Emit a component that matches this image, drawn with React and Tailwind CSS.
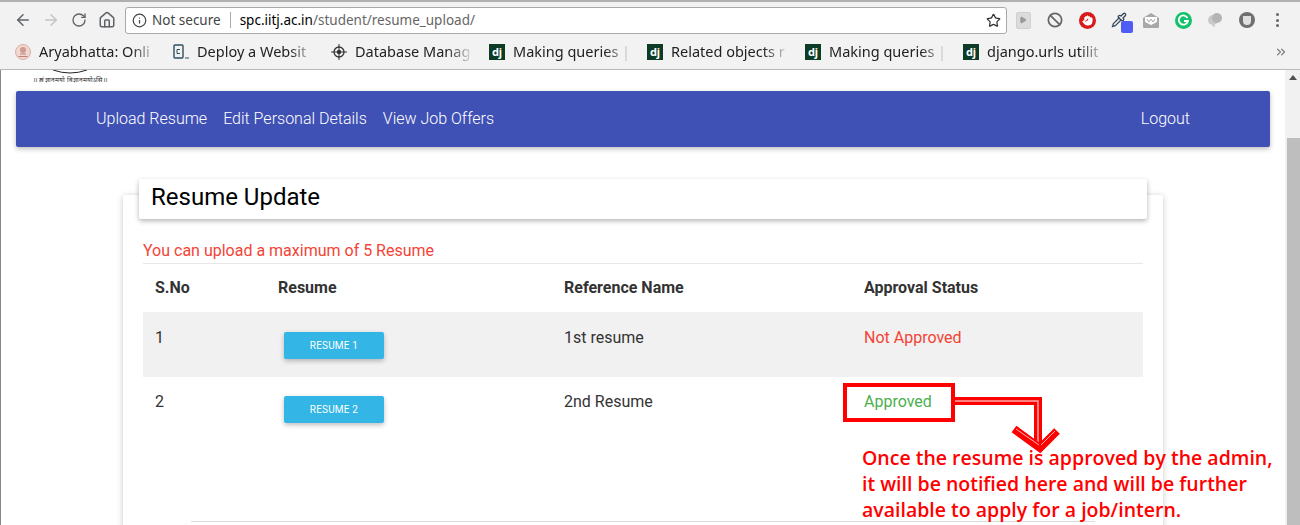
import { ArrowLeft, ArrowRight, RotateCw, Home, Info, Star, ChevronsRight, Ban, Play, Pipette, Hand } from 'lucide-react'

const bookmarks = [
  { label: 'Aryabhatta: Onli', icon: 'seal' },
  { label: 'Deploy a Websit', icon: 'code' },
  { label: 'Database Manag', icon: 'target' },
  { label: 'Making queries |', icon: 'dj' },
  { label: 'Related objects r', icon: 'dj' },
  { label: 'Making queries |', icon: 'dj' },
  { label: 'django.urls utilit', icon: 'dj' },
]

function BookmarkIcon({ type }) {
  if (type === 'dj') {
    return (
      <span className="flex h-4 w-4 shrink-0 items-center justify-center bg-[#0c3c26] text-[11px] font-bold leading-none text-white">
        dj
      </span>
    )
  }
  if (type === 'seal') {
    return (
      <svg width="16" height="16" viewBox="0 0 16 16" className="shrink-0">
        <circle cx="8" cy="8" r="7.5" fill="#f0d8d0" stroke="#dcb0a8" />
        <circle cx="8" cy="6" r="3" fill="#cf9a90" />
        <path d="M3.5 12.5h9M5 10h6" stroke="#c08078" />
      </svg>
    )
  }
  if (type === 'code') {
    return (
      <svg width="16" height="16" viewBox="0 0 16 16" className="shrink-0">
        <rect x="1" y="1" width="9" height="13" rx="1" fill="none" stroke="#2f4f5f" strokeWidth="1.4" />
        <path d="M7 5.5H4v4h3" fill="none" stroke="#2f4f5f" />
        <path d="M12 14h4" stroke="#2f4f5f" />
      </svg>
    )
  }
  return (
    <svg width="16" height="16" viewBox="0 0 16 16" className="shrink-0">
      <circle cx="8" cy="8" r="5" fill="none" stroke="#333" strokeWidth="1.3" />
      <circle cx="8" cy="8" r="2.2" fill="#333" />
      <path d="M8 0v16M0 8h16" stroke="#333" />
    </svg>
  )
}

function ExtSlot({ children }) {
  return <div className="relative flex h-6 w-8 items-center justify-center">{children}</div>
}

function Extensions() {
  return (
    <div className="flex items-center">
      <ExtSlot>
        <div className="flex h-[17px] w-[15px] items-center justify-center rounded-[2px] border border-[#d0d0d0] bg-[#dcdcdc]">
          <Play size={8} className="fill-[#999] text-[#999]" />
        </div>
      </ExtSlot>
      <ExtSlot>
        <Ban size={16} className="text-[#666]" strokeWidth={2.6} />
      </ExtSlot>
      <ExtSlot>
        <div className="flex h-[17px] w-[17px] items-center justify-center rounded-full bg-[#d81a1a]">
          <Hand size={11} className="fill-white text-white" />
        </div>
      </ExtSlot>
      <ExtSlot>
        <Pipette size={16} className="text-[#34495e]" />
        <span className="absolute left-[18px] top-[13px] h-3 w-3 rounded-[2px] bg-[#4f5df5]" />
      </ExtSlot>
      <ExtSlot>
        <svg width="16" height="15" viewBox="0 0 16 15">
          <path d="M0 5L8 0l8 5v9a1 1 0 0 1-1 1H1a1 1 0 0 1-1-1z" fill="#a8a8a8" />
          <path d="M2 4h12v5l-6 3-6-3z" fill="#fff" />
          <path d="M4 6l2 3 2-3 2 3 2-3" fill="none" stroke="#a8a8a8" />
        </svg>
      </ExtSlot>
      <ExtSlot>
        <svg width="17" height="17" viewBox="0 0 17 17">
          <circle cx="8.5" cy="8.5" r="8.5" fill="#15c26b" />
          <path d="M12.5 6a4.6 4.6 0 1 0 .4 3H9" fill="none" stroke="#fff" strokeWidth="1.8" />
        </svg>
      </ExtSlot>
      <ExtSlot>
        <svg width="16" height="16" viewBox="0 0 16 16">
          <circle cx="6" cy="8" r="5" fill="#c8c8c8" />
          <circle cx="10" cy="6" r="5" fill="#b4b4b4" />
          <path d="M5 13l2 2 1-2z" fill="#c0c0c0" />
        </svg>
      </ExtSlot>
      <ExtSlot>
        <div className="flex h-[16px] w-[16px] items-center justify-center rounded-full bg-[#707070]">
          <span className="h-[9px] w-[8px] rounded-b-full bg-[#e0e0e0]" />
        </div>
      </ExtSlot>
      <div className="flex h-6 w-7 flex-col items-center justify-center gap-[2.5px]">
        <span className="h-[3px] w-[3px] rounded-full bg-[#666]" />
        <span className="h-[3px] w-[3px] rounded-full bg-[#666]" />
        <span className="h-[3px] w-[3px] rounded-full bg-[#666]" />
      </div>
    </div>
  )
}

function BrowserChrome() {
  return (
    <div className="font-['Noto_Sans',sans-serif]">
      <div className="h-[2px] bg-[#b0b0b0]" />
      <div className="flex h-[33px] items-center bg-[#f2f2f2] pl-[14px] pt-[3px]">
        <ArrowLeft size={18} className="text-[#5f6368]" strokeWidth={2} />
        <ArrowRight size={18} className="ml-[10px] text-[#c4c4c4]" strokeWidth={2} />
        <RotateCw size={16} className="ml-[11px] text-[#5f6368]" strokeWidth={2} />
        <Home size={18} className="ml-[11px] text-[#5f6368]" strokeWidth={2} />
        <div className="ml-[9px] flex h-[27px] w-[882px] items-center rounded-[3px] border border-[#a9a9a9] bg-white pl-[6px] pr-[5px]">
          <Info size={15} className="text-[#444]" />
          <span className="ml-[5px] text-[13.5px] text-[#444]">Not secure</span>
          <span className="mx-[9px] h-[16px] w-px bg-[#aaa]" />
          <span className="text-[13.5px] text-black">spc.iitj.ac.in</span>
          <span className="text-[13.5px] text-[#666]">/student/resume_upload/</span>
          <Star size={15} className="ml-auto text-[#333]" strokeWidth={2} />
        </div>
        <Extensions />
      </div>
      <div className="flex h-[35px] items-center border-b border-[#b8b8b8] bg-[#f2f2f2] pb-px pl-[15px] pr-[12px]">
        {bookmarks.map((b) => (
          <div key={b.label} className="mr-[16px] flex items-center gap-[8px]">
            <BookmarkIcon type={b.icon} />
            <span className="w-[118px] overflow-hidden whitespace-nowrap text-[14.5px] text-[#222] [mask-image:linear-gradient(to_right,black_78%,#0006_92%,#0000)]">
              {b.label}
            </span>
          </div>
        ))}
        <ChevronsRight size={14} className="ml-auto text-[#777]" />
      </div>
    </div>
  )
}

function ResumeRow({ no, name, status, statusClass, shaded }) {
  const textTop = shaded ? 'pt-[14px]' : 'pt-[13px]'
  return (
    <div className={`flex h-[65px] items-start ${shaded ? 'bg-[#f1f1f1]' : ''}`}>
      <span className={`w-[135px] pl-[12px] text-[16px] text-[#333] ${textTop}`}>{no}</span>
      <div className={`w-[286px] pl-[6px] ${shaded ? 'pt-[20px]' : 'pt-[19px]'}`}>
        <button className="block h-[27px] w-[100px] rounded-[2px] bg-[#33b5e5] text-[10px] tracking-[0.2px] text-white shadow-[0_2px_5px_rgba(0,0,0,0.26)]">
          RESUME {no}
        </button>
      </div>
      <span className={`w-[300px] text-[16px] text-[#333] ${textTop}`}>{name}</span>
      <span className={`text-[16px] ${textTop} ${statusClass}`}>{status}</span>
    </div>
  )
}

function Annotation() {
  return (
    <div className="absolute left-[842px] top-[313px] w-[440px]">
      <svg width="220" height="76" viewBox="0 0 220 76" className="block">
        <rect x="2" y="2" width="108" height="35" fill="none" stroke="#ff0000" strokeWidth="4" />
        <path d="M112 18H195V62" fill="none" stroke="#ff0000" strokeWidth="8" />
        <path d="M112 18H195V62" fill="none" stroke="#ffa8a8" strokeWidth="1.5" />
        <path d="M171 46L197 65L214 48" fill="none" stroke="#ff0000" strokeWidth="8" />
        <path d="M173 46L196 62M212 48L198 62" fill="none" stroke="#ffb5b5" strokeWidth="1" />
      </svg>
      <p className="-mt-[14px] ml-[19px] whitespace-nowrap font-['Open_Sans',sans-serif] text-[19.5px] font-semibold leading-[26px] text-[#ff0000]">
        Once the resume is approved by the admin,
        <br />
        it will be notified here and will be further
        <br />
        available to apply for a job/intern.
      </p>
    </div>
  )
}

export default function App() {
  return (
    <div className="relative h-[525px] w-[1300px] overflow-hidden bg-white">
      <BrowserChrome />
      <div className="relative flex h-[455px] border-l border-[#888] font-['Roboto',sans-serif]">
        <div className="relative -ml-px flex-1 overflow-hidden">
          {/* logo is scrolled off, only its lower edge shows */}
          <div className="h-[21px] pl-[33px]">
            <svg width="40" height="4" viewBox="0 0 40 4" className="ml-[19px] block">
              <path d="M1 0Q18 6 35 0" fill="none" stroke="#222" />
            </svg>
            <p className="mt-[2px] whitespace-nowrap text-[6.5px] leading-[8px] text-[#222]">
              ।। त्वं ज्ञानमयो विज्ञानमयोऽसि ।।
            </p>
          </div>
          <nav className="ml-[16px] mr-[15px] flex h-[56px] items-center rounded-[2px] bg-[#3f51b5] px-[80px] text-[16px] font-light text-white shadow-[0_2px_5px_rgba(0,0,0,0.26)]">
            <a className="mr-[16px]">Upload Resume</a>
            <a className="mr-[16px]">Edit Personal Details</a>
            <a>View Job Offers</a>
            <a className="ml-auto">Logout</a>
          </nav>
          <div className="ml-[123px] mr-[122px] mt-[48px] flow-root h-[400px] rounded-[2px] bg-white px-[20px] shadow-[0_1px_6px_rgba(0,0,0,0.22)]">
            <div className="relative -mx-[4px] -mt-[16px] flex h-[40px] items-center rounded-[2px] bg-white pb-[4px] pl-[12px] text-[24px] text-black shadow-[0_2px_5px_rgba(0,0,0,0.3)]">
              Resume Update
            </div>
            <p className="mt-[15px] flex h-[30px] items-center border-b border-[#e8e8e8] pt-[5px] text-[16px] text-[#f44336]">
              You can upload a maximum of 5 Resume
            </p>
            <div className="flex h-[48px] items-center text-[16px] font-bold text-[#333]">
              <span className="w-[135px] pl-[12px]">S.No</span>
              <span className="w-[286px]">Resume</span>
              <span className="w-[300px]">Reference Name</span>
              <span>Approval Status</span>
            </div>
            <ResumeRow no="1" name="1st resume" status="Not Approved" statusClass="text-[#f44336]" shaded />
            <ResumeRow no="2" name="2nd Resume" status="Approved" statusClass="text-[#4caf50]" />
            <div className="mx-[48px] mt-[79px] h-px bg-[#ddd]" />
          </div>
        </div>
        <div className="flex w-[15px] flex-col bg-[#f1f1f1]">
          <div className="flex h-[15px] items-center justify-center">
            <span className="border-x-[4px] border-b-[5px] border-x-transparent border-b-[#505050]" />
          </div>
          <div className="ml-[2px] mt-[53px] flex-1 bg-[#bebebe]" />
        </div>
        <Annotation />
      </div>
    </div>
  )
}
